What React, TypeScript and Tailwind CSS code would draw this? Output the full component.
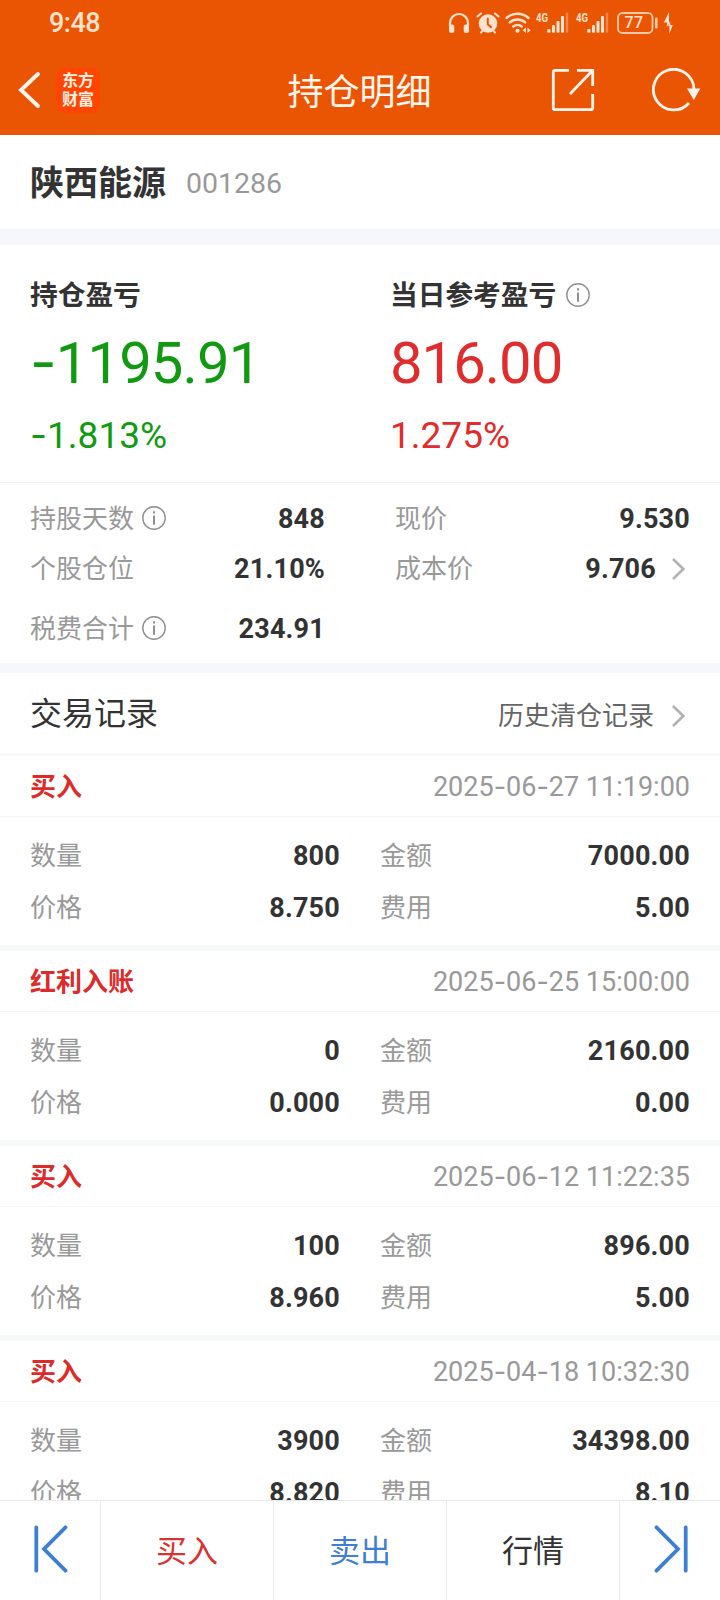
import { Fragment } from "react";
import clsx from "clsx";

const trades = [
  { type: "买入", time: "2025-06-27 11:19:00", count: "800", amount: "7000.00", price: "8.750", fee: "5.00" },
  { type: "红利入账", time: "2025-06-25 15:00:00", count: "0", amount: "2160.00", price: "0.000", fee: "0.00" },
  { type: "买入", time: "2025-06-12 11:22:35", count: "100", amount: "896.00", price: "8.960", fee: "5.00" },
  { type: "买入", time: "2025-04-18 10:32:30", count: "3900", amount: "34398.00", price: "8.820", fee: "8.10" },
];

// Roboto 的连字符偏短，单独换成 Inter
function Num({ value, className }: { value: string; className?: string }) {
  return (
    <span className={clsx("whitespace-nowrap leading-none", className)}>
      {value.split("-").map((part, i) => (
        <Fragment key={i}>
          {i > 0 && <span className="font-['Inter'] leading-[0]">-</span>}
          {part}
        </Fragment>
      ))}
    </span>
  );
}

function InfoIcon({ className }: { className?: string }) {
  return (
    <svg viewBox="0 0 24 24" className={clsx("h-6 w-6 shrink-0", className)} fill="none" stroke="#8f8f8f">
      <circle cx="12" cy="12" r="11.2" strokeWidth="1.4" />
      <path d="M12 9.5v9.3" strokeWidth="2" />
      <path d="M12 5.2v2.4" strokeWidth="2" />
    </svg>
  );
}

function ChevronIcon() {
  return (
    <svg viewBox="0 0 13 22" className="h-[22px] w-[13px] shrink-0" fill="none" stroke="#b2b2b2" strokeWidth="2.6">
      <path d="M1 1l10.3 10L1 21" />
    </svg>
  );
}

function SignalIcon() {
  return (
    <svg viewBox="0 0 34 22" className="h-[22px] w-[34px] overflow-visible" fill="#ffe3cf">
      <text x="0" y="9.5" fontSize="12" fontWeight="700" textLength="12" lengthAdjust="spacingAndGlyphs">
        4G
      </text>
      <rect x="11.3" y="17" width="3.2" height="3.8" rx="1" />
      <rect x="16" y="13" width="3" height="7.8" rx="1" />
      <rect x="20.5" y="9" width="3" height="11.8" rx="1" />
      <rect x="25" y="4" width="3" height="16.8" rx="1" />
      <rect x="29.8" y="0.5" width="2.4" height="20.3" rx="1" opacity="0.35" />
    </svg>
  );
}

function StatusBar() {
  return (
    <div className="flex h-[45px] items-center pl-[49px] pr-[46px] text-[#ffe3cf]">
      <span className="flex-1 pt-[2px] text-[27px] font-medium leading-none tracking-[-0.5px]">9:48</span>
      <div className="flex items-center">
        <svg viewBox="0 0 22 22" className="mr-[6px] h-[22px] w-[22px]">
          <path d="M2 14V11a9 9 0 0 1 18 0v3" fill="none" stroke="#ffe3cf" strokeWidth="2.2" />
          <rect x="1" y="12.5" width="5.3" height="8.5" rx="2" fill="#ffe3cf" />
          <rect x="15.7" y="12.5" width="5.3" height="8.5" rx="2" fill="#ffe3cf" />
        </svg>
        <svg viewBox="0 0 24 22" className="mr-[5px] h-[22px] w-6" strokeLinecap="round">
          <circle cx="12" cy="11.5" r="9.3" fill="#ffe3cf" />
          <path d="M1.5 4.5L5 1.5M22.5 4.5L19 1.5M5 20.5l2-2M19 20.5l-2-2" stroke="#ffe3cf" strokeWidth="2" />
          <path d="M11.8 6.5v5.7l3.3 3" stroke="#ea5504" strokeWidth="2" fill="none" />
        </svg>
        <svg viewBox="0 0 26 22" className="mr-[5px] h-[22px] w-[26px]" fill="none" stroke="#ffe3cf" strokeWidth="2.4" strokeLinecap="round">
          <path d="M1.5 6a16.5 16.5 0 0 1 22 0" />
          <path d="M4.8 10.4a11.5 11.5 0 0 1 15.4 0" />
          <path d="M8.2 14.5a6.6 6.6 0 0 1 8.6 0" />
          <circle cx="12.5" cy="18.8" r="2.1" fill="#ffe3cf" stroke="none" />
          <path d="M20.9 15.5v5.5l-3.2-2.7zM22.4 15.5v5.5l3.2-2.7z" fill="#ffe3cf" stroke="none" />
        </svg>
        <span className="mr-[6px]">
          <SignalIcon />
        </span>
        <span className="mr-[7px]">
          <SignalIcon />
        </span>
        <svg viewBox="0 0 42 22" className="mr-[4px] h-[22px] w-[42px]">
          <rect x="1" y="1" width="34.5" height="20" rx="4.5" fill="none" stroke="#ffc9a6" strokeWidth="1.8" />
          <rect x="38" y="5.5" width="2.6" height="11" rx="1.2" fill="#ffc9a6" />
          <text x="17" y="15.5" fontSize="16" fontWeight="500" textAnchor="middle" letterSpacing="0.3" fill="#ffe3cf">
            77
          </text>
        </svg>
        <svg viewBox="0 0 10 24" className="mr-px h-6 w-[10px]" fill="#ffe3cf">
          <path d="M6 1L.8 11.5h3.4L3.7 16 6 12.5zM7 10L5.2 15h1.2v8L9.7 14H7.4z" />
        </svg>
      </div>
    </div>
  );
}

function NavBar() {
  return (
    <div className="flex h-[90px] items-center justify-between pl-[18px] pr-[19px]">
      <div className="flex w-[180px] items-center">
        <svg viewBox="0 0 23 38" className="h-[38px] w-[23px]" fill="none" stroke="#fff5ec" strokeWidth="3.9" strokeLinecap="round">
          <path d="M20 3L3 19l17 16" />
        </svg>
        <div className="ml-[15px] flex h-[45px] w-[44px] flex-col items-center justify-center rounded-[9px] bg-[#ff4500] text-[16px] font-bold leading-[19px] text-[#fff0e4]">
          <span>东方</span>
          <span>财富</span>
        </div>
      </div>
      <h1 className="pt-[5px] text-[36px] leading-none text-[#fff5ec]">持仓明细</h1>
      <div className="flex w-[180px] items-center justify-end">
        <svg viewBox="0 0 44 44" className="h-11 w-11" fill="none" stroke="#fff5ec" strokeWidth="2.8">
          <path d="M18 2.3H4.3a2 2 0 0 0-2 2v35.4a2 2 0 0 0 2 2h35.4a2 2 0 0 0 2-2V26" />
          <path d="M26 2.3h15.7V18M41 3L19 26" />
        </svg>
        <svg viewBox="0 0 50 44" className="ml-[56px] h-11 w-[50px]" fill="none" stroke="#fff5ec" strokeWidth="2.8">
          <path d="M38 35A20.3 20.3 0 1 1 43 21" />
          <path d="M36 20.5h13.3L42.8 32z" fill="#fff5ec" stroke="none" />
        </svg>
      </div>
    </div>
  );
}

function Stat({ label, value, info }: { label: string; value: string; info?: boolean }) {
  return (
    <>
      <span className="text-[26px] leading-none text-[#999]">{label}</span>
      {info && <InfoIcon className="-mt-[2px] ml-2" />}
      <Num value={value} className="ml-auto text-[27px] font-bold tracking-[0.2px] text-[#333]" />
    </>
  );
}

function Trade({ trade }: { trade: (typeof trades)[number] }) {
  return (
    <div className="shrink-0 border-b-[6px] border-[#f7f8f8]">
      <div className="flex h-[61px] items-center justify-between border-b border-[#f5f5f5] px-[30px] pt-[2px]">
        <span className="text-[26px] font-bold leading-none text-[#dc2b2b]">{trade.type}</span>
        <Num value={trade.time} className="text-[27px] text-[#999]" />
      </div>
      <div className="grid grid-cols-[310px_310px] gap-x-[40px] pb-[11px] pl-[30px] pt-[13px]">
        <div className="flex h-[52px] items-center">
          <Stat label="数量" value={trade.count} />
        </div>
        <div className="flex h-[52px] items-center">
          <Stat label="金额" value={trade.amount} />
        </div>
        <div className="flex h-[52px] items-center">
          <Stat label="价格" value={trade.price} />
        </div>
        <div className="flex h-[52px] items-center">
          <Stat label="费用" value={trade.fee} />
        </div>
      </div>
    </div>
  );
}

export default function App() {
  return (
    <div className="flex h-[1600px] w-[720px] flex-col overflow-hidden bg-white font-[Roboto,'Noto_Sans_CJK_SC',sans-serif] text-[#333]">
      <header className="shrink-0 bg-[#ea5504]">
        <StatusBar />
        <NavBar />
      </header>

      <div className="flex h-[110px] shrink-0 items-center border-b-[16px] border-[#f6f7fa] pl-[30px] pt-[2px]">
        <span className="text-[34px] font-bold leading-none">陕西能源</span>
        <Num value="001286" className="ml-5 pt-[2px] text-[28.5px] text-[#999]" />
      </div>

      <div className="grid h-[238px] shrink-0 grid-cols-[360px_1fr] border-b border-[#f3f3f3] pl-[30px] pt-[36px]">
        <div className="flex flex-col text-[#119a11]">
          <span className="text-[27.7px] font-bold leading-[30px] text-[#333]">持仓盈亏</span>
          <Num value="-1195.91" className="mt-[23px] text-[58px] tracking-[-0.9px]" />
          <Num value="-1.813%" className="mt-[25px] text-[37px]" />
        </div>
        <div className="flex flex-col text-[#e02c2c]">
          <span className="flex items-center text-[27.7px] font-bold leading-[30px] text-[#333]">
            当日参考盈亏
            <InfoIcon className="-mt-[3px] ml-[10px]" />
          </span>
          <Num value="816.00" className="mt-[23px] text-[58px] tracking-[-1px]" />
          <Num value="1.275%" className="mt-[25px] text-[37px]" />
        </div>
      </div>

      <div className="grid h-[190px] shrink-0 grid-cols-[295px_295px] content-start gap-x-[70px] border-b-[10px] border-[#f6f7fa] pl-[30px] pt-[11px]">
        <div className="flex h-[50px] items-center">
          <Stat label="持股天数" value="848" info />
        </div>
        <div className="flex h-[50px] items-center">
          <Stat label="现价" value="9.530" />
        </div>
        <div className="flex h-[50px] items-center">
          <Stat label="个股仓位" value="21.10%" />
        </div>
        <div className="flex h-[50px] items-center">
          <Stat label="成本价" value="9.706" />
          <span className="ml-4 mr-[5px]">
            <ChevronIcon />
          </span>
        </div>
        <div className="mt-[10px] flex h-[50px] items-center">
          <Stat label="税费合计" value="234.91" info />
        </div>
      </div>

      <div className="flex h-[83px] shrink-0 items-center justify-between border-b-[3px] border-[#f7f8f8] pl-[30px] pr-[35px] pt-[2px]">
        <span className="text-[32px] leading-none">交易记录</span>
        <span className="flex items-center pt-[3px] text-[26px] leading-none text-[#666]">
          历史清仓记录
          <span className="ml-[18px]">
            <ChevronIcon />
          </span>
        </span>
      </div>

      <div className="flex min-h-0 flex-1 flex-col overflow-hidden">
        {trades.map((trade) => (
          <Trade key={trade.time} trade={trade} />
        ))}
      </div>

      <nav className="grid h-[100px] shrink-0 grid-cols-[101px_173px_173px_173px_100px] divide-x divide-[#ebebeb] border-t border-[#e8e8e8] text-[31px] leading-none">
        <button className="flex items-center justify-center pb-[3px] pl-px">
          <svg viewBox="0 0 34 48" className="h-12 w-[34px]" fill="none" stroke="#3f7fcf" strokeWidth="3.8" strokeLinecap="round">
            <path d="M2.3 2.3v43.4M31.5 2.3L10 24l21.5 21.7" />
          </svg>
        </button>
        <button className="pt-[2px] text-[#d63333]">买入</button>
        <button className="pt-[2px] text-[#3f7fcf]">卖出</button>
        <button className="pt-[2px]">行情</button>
        <button className="flex items-center justify-center pb-[3px] pl-px">
          <svg viewBox="0 0 34 48" className="h-12 w-[34px]" fill="none" stroke="#3f7fcf" strokeWidth="3.8" strokeLinecap="round">
            <path d="M31.7 2.3v43.4M2.5 2.3L24 24 2.5 45.7" />
          </svg>
        </button>
      </nav>
    </div>
  );
}
